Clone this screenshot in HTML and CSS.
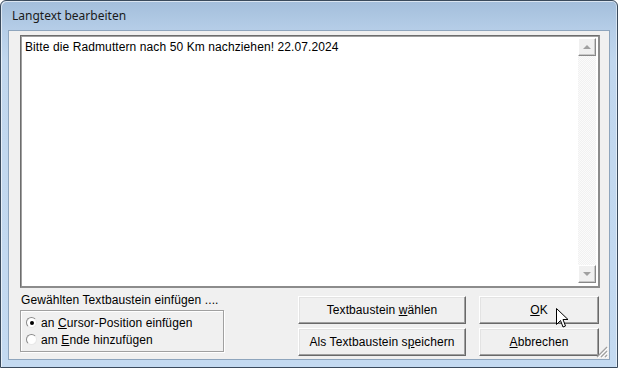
FILE: index.html
```html
<!DOCTYPE html>
<html lang="de">
<head>
    <meta charset="UTF-8">
    <title>Langtext bearbeiten</title>
    <link rel="stylesheet" href="styles.css">
</head>
<body>
    <div class="window">
        <div class="titlebar">Langtext bearbeiten</div>
        <div class="client">
            <div class="memo">
                <div class="memo-text">Bitte die Radmuttern nach 50 Km nachziehen! 22.07.2024</div>
                <div class="scrollbar">
                    <div class="sb-btn"><span class="arrow up"></span></div>
                    <div class="sb-track"></div>
                    <div class="sb-btn"><span class="arrow down"></span></div>
                </div>
            </div>

            <div class="bottom">
                <div class="insert-panel">
                    <div class="insert-label">Gewählten Textbaustein einfügen ....</div>
                    <div class="groupbox">
                        <div class="radio-row"><span class="radio checked"></span><span>an <u>C</u>ursor-Position einfügen</span></div>
                        <div class="radio-row"><span class="radio"></span><span>am <u>E</u>nde hinzufügen</span></div>
                    </div>
                </div>
                <div class="buttons">
                    <button class="btn wide">Textbaustein <u>w</u>ählen</button>
                    <button class="btn"><u>O</u>K</button>
                    <button class="btn wide">Als Textbaustein s<u>p</u>eichern</button>
                    <button class="btn"><u>A</u>bbrechen</button>
                </div>
            </div>

            <svg class="grip" width="12" height="12" viewBox="0 0 12 12">
                <path d="M11 1 L1 11 M11 5 L5 11 M11 9 L9 11" stroke="#a0a0a0" stroke-width="1.2"/>
                <path d="M12 2 L2 12 M12 6 L6 12 M12 10 L10 12" stroke="#ffffff" stroke-width="1"/>
            </svg>
        </div>

        <!-- mouse pointer over the OK button -->
        <svg class="pointer" width="13" height="21" viewBox="0 0 13 21">
            <path d="M0.5 0.5 L0.5 16.5 L4.5 12.5 L7 19 L9.5 18 L7 11.5 L12 11.5 Z" fill="#ffffff" stroke="#000000" stroke-width="1"/>
        </svg>
    </div>
</body>
</html>
```

FILE: styles.css
```css
body { margin: 0; font-family: "Liberation Sans", Arial, sans-serif; font-size: 12px; color: #000; letter-spacing: 0.1px; }

.window { position: relative; width: 618px; height: 368px; box-sizing: border-box; border: 1px solid #3a4a5c; border-radius: 6px 6px 0 0; background: linear-gradient(to bottom, #a3bedb 0px, #b6cee8 30px, #c1d7ee 60px, #c4daf1 100%); padding: 0 7px 7px 7px; display: flex; flex-direction: column; box-shadow: inset 1px 1px 0 rgba(255,255,255,0.6), inset -1px 0 0 rgba(255,255,255,0.5); }
.titlebar { height: 29px; display: flex; align-items: center; padding-left: 4px; font-family: "Noto Sans", "Liberation Sans", sans-serif; font-size: 12px; letter-spacing: 0; color: #1a1a1a; }

.client { position: relative; flex: 1; background: #f0f0f0; border: 1px solid #8ea5bd; padding: 4px 9px 0 11px; display: flex; flex-direction: column; }

.memo { height: 253px; box-sizing: border-box; background: #fff; border-top: 1px solid #6d6d6d; border-left: 1px solid #6d6d6d; border-right: 2px solid #8c8c8c; border-bottom: 2px solid #8c8c8c; box-shadow: inset 1px 1px 0 #a0a0a0; display: flex; }
.memo-text { flex: 1; padding: 4px 4px; }

.scrollbar { width: 18px; display: flex; flex-direction: column; padding: 2px 2px 3px 0; }
.sb-btn { height: 18px; box-sizing: border-box; background: #f0f0f0; border: 1px solid; border-color: #fff #888 #888 #fff; box-shadow: inset -1px -1px 0 #c8c8c8; display: flex; align-items: center; justify-content: center; }
.sb-track { flex: 1; background-color: #f7f7f7; background-image: repeating-conic-gradient(#f1f1f1 0 25%, #fbfbfb 0 50%); background-size: 2px 2px; }
.arrow { width: 0; height: 0; border-left: 4px solid transparent; border-right: 4px solid transparent; }
.arrow.up { border-bottom: 4px solid #a0a0a0; }
.arrow.down { border-top: 4px solid #a0a0a0; }

.bottom { display: flex; justify-content: space-between; padding-top: 4px; }

.insert-panel { width: 204px; }
.insert-label { height: 17px; line-height: 17px; padding-left: 1px; }
.groupbox { margin-top: 1px; height: 42px; box-sizing: border-box; border: 1px solid #a0a0a0; box-shadow: 1px 1px 0 #fff, inset 1px 1px 0 #fff; padding: 3px 0 0 5px; }
.radio-row { display: flex; align-items: center; height: 17px; }
.radio { width: 11px; height: 11px; box-sizing: border-box; border-radius: 50%; border: 1px solid; border-color: #8a8a8a #e8e8e8 #e8e8e8 #8a8a8a; background: #fff; margin-right: 4px; display: flex; align-items: center; justify-content: center; }
.radio.checked::after { content: ""; width: 4px; height: 4px; border-radius: 50%; background: #000; }

.buttons { display: grid; grid-template-columns: 168px 120px; column-gap: 13px; row-gap: 4px; padding-top: 4px; padding-right: 1px; }
.btn { height: 28px; box-sizing: border-box; font-family: "Liberation Sans", Arial, sans-serif; font-size: 12px; letter-spacing: 0.1px; color: #000; background: #f0f0f0; border: 1px solid; border-color: #fff #696969 #696969 #fff; box-shadow: inset -1px -1px 0 #a0a0a0, inset 1px 1px 0 #e3e3e3; padding: 0; }

.grip { position: absolute; right: 1px; bottom: 1px; }
.pointer { position: absolute; left: 555px; top: 307px; }
```
